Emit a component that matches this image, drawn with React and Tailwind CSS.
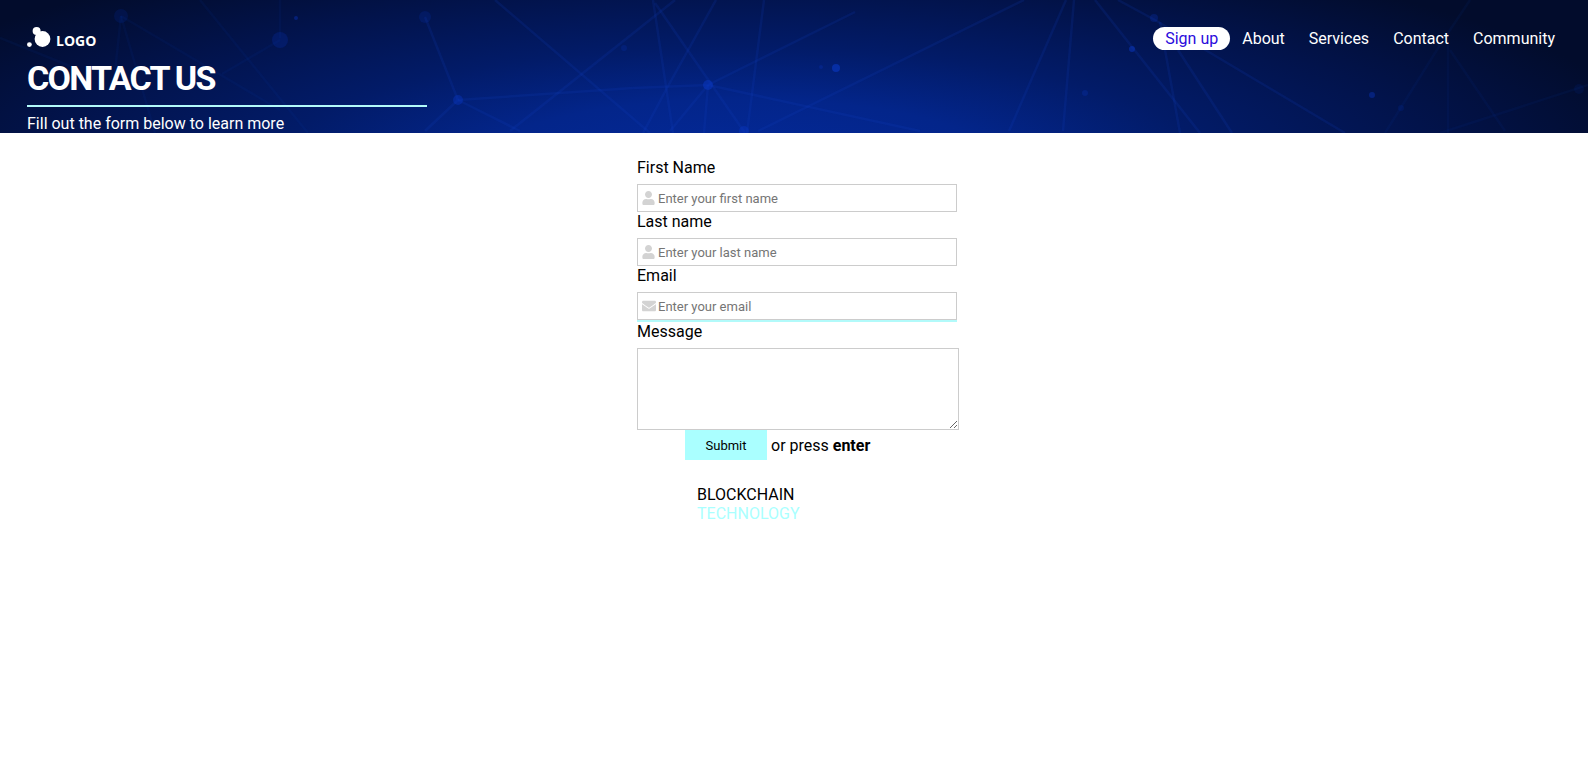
import { FaUser, FaEnvelope } from "react-icons/fa";

const links = ["About", "Services", "Contact", "Community"];

const lines = [
  [425, 17, 458, 100], [458, 100, 633, 88], [633, 88, 708, 85], [458, 100, 520, 131],
  [458, 100, 425, 131], [495, 0, 650, 133], [510, 131, 675, 0], [653, 0, 673, 133],
  [655, 3, 745, 133], [716, 0, 667, 88], [667, 88, 643, 133], [708, 85, 670, 131],
  [708, 85, 704, 133], [764, 0, 747, 133], [708, 85, 855, 12], [708, 85, 920, 131],
  [758, 131, 1024, 0], [1066, 0, 1009, 131], [1074, 0, 1063, 131], [1095, 0, 1200, 133],
  [1118, 0, 1155, 20], [1155, 20, 1345, 133], [1160, 22, 1180, 133], [1178, 50, 1232, 133],
];

const faintLines = [
  [1440, 45, 1385, 133], [1470, 0, 1440, 45], [1448, 45, 1448, 133], [1450, 50, 1505, 131],
  [1440, 133, 1588, 85], [200, 0, 308, 133], [280, 0, 280, 38], [280, 40, 222, 74],
  [121, 16, 155, 133], [121, 16, 113, 90], [121, 16, 280, 110], [0, 38, 70, 66],
];

const nodes = [
  [121, 16, 7, 0.15], [280, 40, 8, 0.22], [296, 18, 2, 0.4], [425, 17, 6, 0.18],
  [458, 100, 5, 0.4], [708, 85, 5, 0.5], [624, 48, 3, 0.2], [744, 131, 5, 0.4],
  [821, 67, 2, 0.25], [836, 68, 4, 0.6], [1132, 49, 3, 0.5], [1154, 18, 4, 0.25],
  [1085, 93, 3, 0.25], [1372, 95, 3, 0.4], [1401, 108, 3, 0.15], [1579, 89, 5, 0.1],
];

function Segments({ items }) {
  return items.map(([x1, y1, x2, y2], i) => <line key={i} x1={x1} y1={y1} x2={x2} y2={y2} />);
}

function NetworkBackground() {
  return (
    <svg className="absolute inset-0 h-full w-full" viewBox="0 0 1588 133" preserveAspectRatio="none" aria-hidden="true">
      <defs>
        <radialGradient id="glow" gradientUnits="userSpaceOnUse" cx="0" cy="0" r="1" gradientTransform="translate(740 165) scale(930 235)">
          <stop offset="0" stopColor="#04299a" />
          <stop offset="0.28" stopColor="#03258a" />
          <stop offset="0.5" stopColor="#021b68" />
          <stop offset="0.75" stopColor="#02134b" />
          <stop offset="1" stopColor="#020c2c" />
        </radialGradient>
      </defs>
      <rect width="1588" height="133" fill="url(#glow)" />
      <g stroke="#1540c8" strokeOpacity="0.15" strokeWidth="2.5">
        <Segments items={lines} />
      </g>
      <g stroke="#1540c8" strokeOpacity="0.07" strokeWidth="2.5">
        <Segments items={faintLines} />
      </g>
      <g fill="#0a38c4">
        {nodes.map(([cx, cy, r, o], i) => (
          <circle key={i} cx={cx} cy={cy} r={r} fillOpacity={o} />
        ))}
      </g>
    </svg>
  );
}

function Logo() {
  return (
    <a href="#" className="flex h-5 items-end gap-[5px]">
      <svg width="24" height="20" viewBox="0 0 24 20" fill="#fff" aria-hidden="true">
        <circle cx="2.4" cy="17.6" r="2.4" />
        <circle cx="9.6" cy="4" r="4" />
        <circle cx="15.5" cy="12" r="7.9" />
      </svg>
      <span className="font-['Open_Sans',sans-serif] text-sm leading-3 font-bold">LOGO</span>
    </a>
  );
}

function Field({ id, label, type, placeholder, icon: Icon, iconClass, underline }) {
  return (
    <div className={underline ? "w-80 border-b-2 border-[#b2fafa]" : "w-80"}>
      <label htmlFor={id} className="block leading-[19px]">{label}</label>
      <div className="relative mt-[7px]">
        <Icon className={iconClass} aria-hidden="true" />
        <input
          id={id}
          type={type}
          placeholder={placeholder}
          className="block h-7 w-full border border-[#ccc] bg-transparent pl-5 text-[13px] placeholder:text-[#757575]"
        />
      </div>
    </div>
  );
}

export default function App() {
  return (
    <div className="bg-white font-[Roboto,sans-serif] text-base leading-[19px] text-black">
      <header className="relative flex items-start justify-between bg-[#020c2b] pt-[27px] pr-[21px] pl-[27px] text-white">
        <NetworkBackground />
        <div className="relative">
          <Logo />
          <h1 className="mt-3 text-[34px] leading-[38px] font-bold tracking-tighter">CONTACT US</h1>
          <hr className="mt-2 w-[400px] border-t-2 border-[#b2fafa]" />
          <p className="mt-[7px] leading-[19px]">Fill out the form below to learn more</p>
        </div>
        <nav className="relative flex items-center">
          <a href="#" className="rounded-full bg-white px-3 py-0.5 text-[#2a0bdc]">Sign up</a>
          {links.map((name) => (
            <a key={name} href="#" className="px-3 py-0.5">{name}</a>
          ))}
        </nav>
      </header>

      <main className="mx-auto w-[314px] pt-[25px]">
        <form className="w-[322px]">
          <Field id="first" label="First Name" type="text" placeholder="Enter your first name" icon={FaUser} iconClass="absolute top-[7px] left-[5px] h-[14px] w-[13px] text-[#d3d3d3]" />
          <Field id="last" label="Last name" type="text" placeholder="Enter your last name" icon={FaUser} iconClass="absolute top-[7px] left-[5px] h-[14px] w-[13px] text-[#d3d3d3]" />
          <Field id="email" label="Email" type="email" placeholder="Enter your email" icon={FaEnvelope} iconClass="absolute top-[7px] left-[5px] size-[14px] text-[#d3d3d3]" underline />
          <label htmlFor="message" className="block">Message</label>
          <textarea id="message" className="mt-[7px] block h-[82px] w-full resize border border-[#ccc]" />
          <div className="ml-12 flex items-center gap-1">
            <button type="submit" className="h-[30px] w-[82px] bg-[#aff] text-[13px]">Submit</button>
            <p>or press <strong className="font-bold">enter</strong></p>
          </div>
        </form>
        <footer className="mt-[25px] ml-[60px]">
          <p>BLOCKCHAIN</p>
          <p className="text-[#aff]">TECHNOLOGY</p>
        </footer>
      </main>
    </div>
  );
}
